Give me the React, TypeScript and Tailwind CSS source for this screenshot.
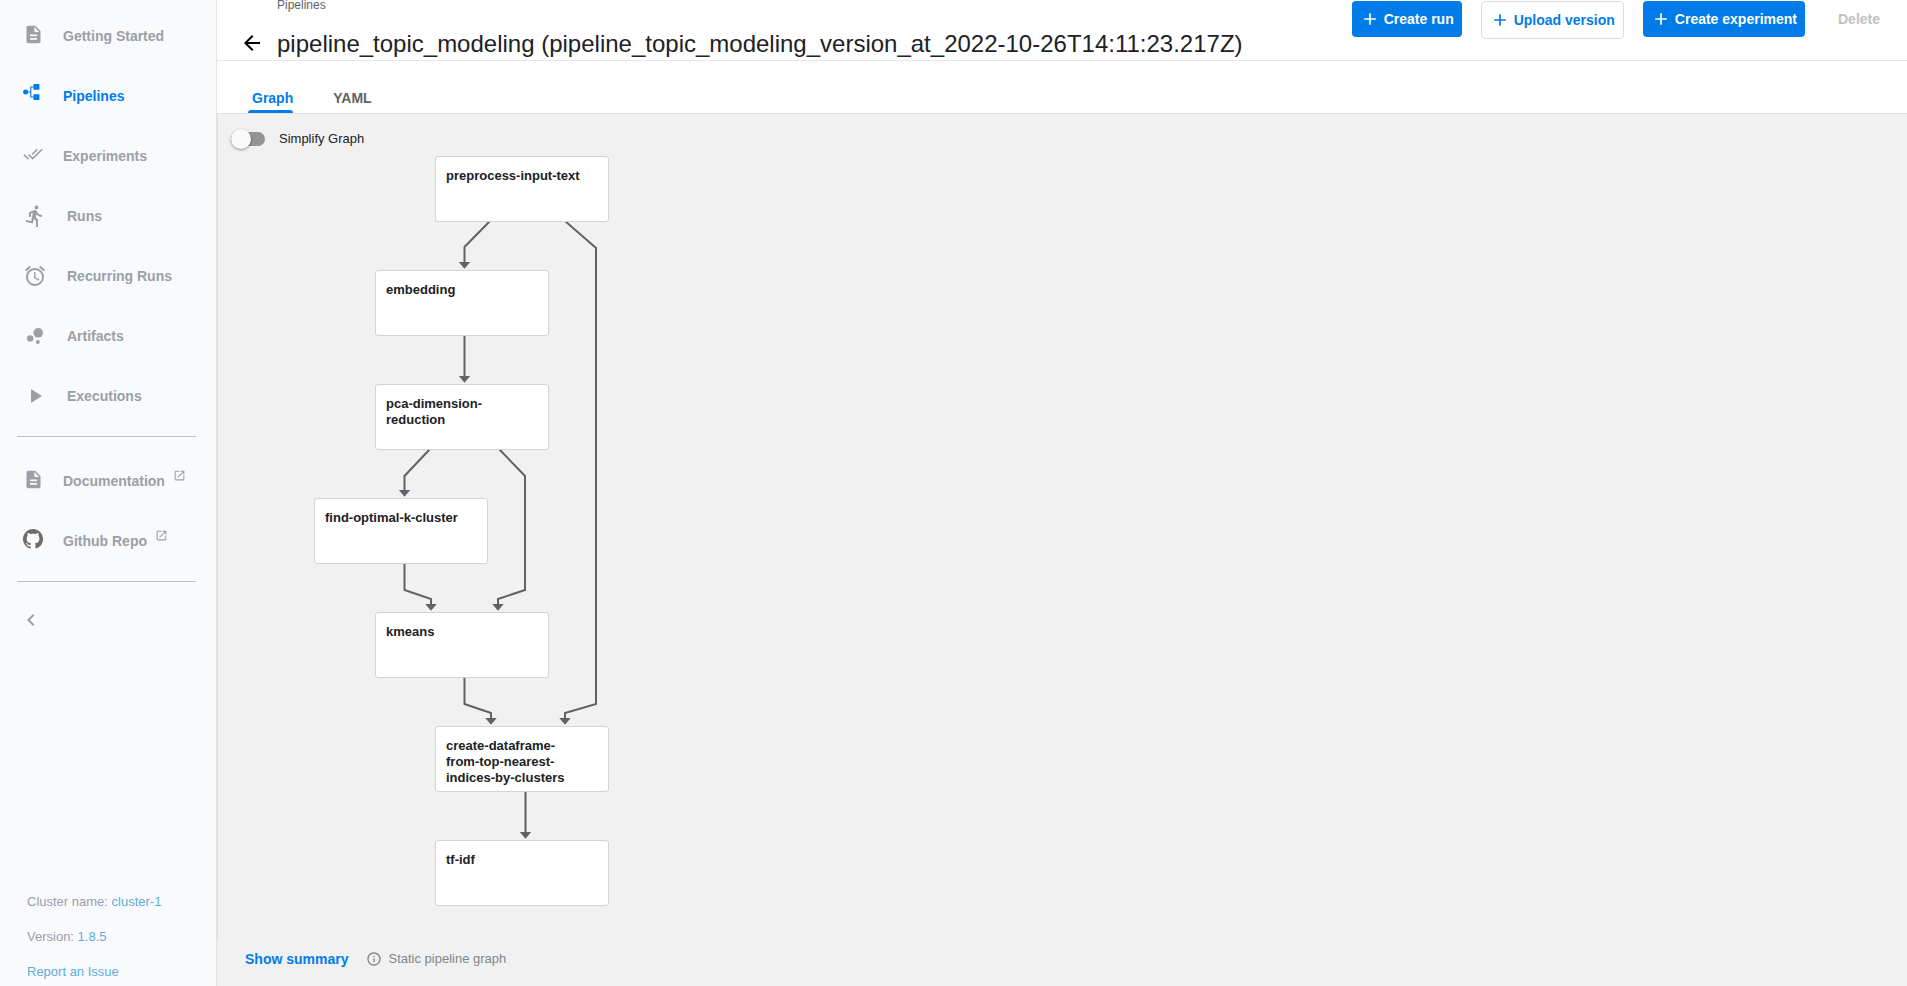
import { useState } from 'react';
import type { ReactNode } from 'react';
import {
  MdAccessAlarm,
  MdAdd,
  MdArrowBack,
  MdBubbleChart,
  MdChevronLeft,
  MdDescription,
  MdDirectionsRun,
  MdDoneAll,
  MdInfoOutline,
  MdOpenInNew,
  MdPlayArrow,
} from 'react-icons/md';

function PipelinesIcon() {
  return (
    <svg width="20" height="20" viewBox="0 0 20 20" fill="currentColor" aria-hidden="true">
      <circle cx="2.6" cy="8" r="2.5" />
      <path d="M10.5 3H7.8v10h2.7M2.4 8h5.4" fill="none" stroke="currentColor" strokeWidth="1.1" />
      <rect x="10.4" y="0" width="6" height="5.8" rx="0.4" />
      <rect x="10.4" y="10.2" width="6" height="5.8" rx="0.4" />
    </svg>
  );
}

function GithubIcon() {
  return (
    <svg width="20" height="20" viewBox="0 0 16 16" fill="#6e6e6e" aria-hidden="true">
      <path d="M8 0C3.58 0 0 3.58 0 8c0 3.54 2.29 6.53 5.47 7.59.4.07.55-.17.55-.38 0-.19-.01-.82-.01-1.49-2.01.37-2.53-.49-2.69-.94-.09-.23-.48-.94-.82-1.13-.28-.15-.68-.52-.01-.53.63-.01 1.08.58 1.23.82.72 1.21 1.87.87 2.33.66.07-.52.28-.87.51-1.07-1.78-.2-3.64-.89-3.64-3.95 0-.87.31-1.59.82-2.15-.08-.2-.36-1.02.08-2.12 0 0 .67-.21 2.2.82.64-.18 1.32-.27 2-.27s1.36.09 2 .27c1.53-1.04 2.2-.82 2.2-.82.44 1.1.16 1.92.08 2.12.51.56.82 1.27.82 2.15 0 3.07-1.87 3.75-3.65 3.95.29.25.54.73.54 1.48 0 1.07-.01 1.93-.01 2.2 0 .21.15.46.55.38A8.01 8.01 0 0 0 16 8c0-4.42-3.58-8-8-8z" />
    </svg>
  );
}

type NavItem = {
  label: string;
  icon: ReactNode;
  large?: boolean;
  active?: boolean;
  external?: boolean;
};

const mainNav: NavItem[] = [
  { label: 'Getting Started', icon: <MdDescription size={21} /> },
  { label: 'Pipelines', icon: <PipelinesIcon />, active: true },
  { label: 'Experiments', icon: <MdDoneAll size={20} /> },
  { label: 'Runs', icon: <MdDirectionsRun size={24} />, large: true },
  { label: 'Recurring Runs', icon: <MdAccessAlarm size={24} />, large: true },
  { label: 'Artifacts', icon: <MdBubbleChart size={24} />, large: true },
  { label: 'Executions', icon: <MdPlayArrow size={24} />, large: true },
];

const linkNav: NavItem[] = [
  { label: 'Documentation', icon: <MdDescription size={21} />, external: true },
  { label: 'Github Repo', icon: <GithubIcon />, external: true },
];

function NavLink({ item }: { item: NavItem }) {
  return (
    <a
      href="#"
      aria-current={item.active ? 'page' : undefined}
      className={`flex h-[60px] items-center gap-5 pl-[23px] text-sm font-bold whitespace-nowrap ${
        item.active ? 'text-[#007cee]' : 'text-[#9aa0a6]'
      }`}
    >
      <span
        className={
          item.large
            ? 'flex size-6 shrink-0 items-center justify-center'
            : 'mb-1 flex size-5 shrink-0 items-center justify-center'
        }
      >
        <span className="shrink-0">{item.icon}</span>
      </span>
      <span className="flex items-center gap-2">
        {item.label}
        {item.external && <MdOpenInNew size={13} className="mb-3" />}
      </span>
    </a>
  );
}

function Sidebar() {
  return (
    <aside className="flex w-[217px] shrink-0 flex-col border-r border-[#e4e7ea] bg-[#f9fafc] pt-[6px] pb-1">
      <nav>
        {mainNav.map((item) => (
          <NavLink key={item.label} item={item} />
        ))}
        <hr className="mt-[10px] mr-5 mb-[14px] ml-[17px] border-[#bdc1c6]" />
        {linkNav.map((item) => (
          <NavLink key={item.label} item={item} />
        ))}
        <hr className="mt-[10px] mr-5 ml-[17px] border-[#bdc1c6]" />
      </nav>
      <button type="button" aria-label="Collapse menu" className="mt-[26px] ml-[19px] self-start text-[#9aa0a6]">
        <MdChevronLeft size={24} />
      </button>
      <div className="mt-auto flex flex-col gap-[15px] pl-[27px] text-[13px] leading-5 text-[#9aa0a6]">
        <p>
          Cluster name: <a href="#" className="text-[#5facdc]">cluster-1</a>
        </p>
        <p>
          Version: <a href="#" className="text-[#5facdc]">1.8.5</a>
        </p>
        <a href="#" className="text-[#5facdc]">Report an Issue</a>
      </div>
    </aside>
  );
}

function PrimaryButton({ label }: { label: string }) {
  return (
    <button
      type="button"
      className="flex h-9 items-center gap-1 rounded-[4px] bg-[#007ce9] px-2 text-sm font-bold whitespace-nowrap text-white"
    >
      <MdAdd size={20} />
      {label}
    </button>
  );
}

function Header() {
  return (
    <header className="flex items-start justify-between border-b border-[#e6e7e8] bg-white pb-[2px]">
      <div className="pl-[23px]">
        <div className="pl-[37px] text-xs leading-[10px] text-[#5f6368]">Pipelines</div>
        <div className="mt-5 flex items-start gap-[13px]">
          <a href="#" aria-label="Back" className="pt-px text-black">
            <MdArrowBack size={24} />
          </a>
          <h1 className="text-2xl leading-7 whitespace-nowrap text-[#202124]">
            pipeline_topic_modeling (pipeline_topic_modeling_version_at_2022-10-26T14:11:23.217Z)
          </h1>
        </div>
      </div>
      <div className="flex items-start gap-[19px] pt-px pr-[13px]">
        <PrimaryButton label="Create run" />
        <button
          type="button"
          className="flex h-[38px] items-center gap-1 rounded-[4px] border border-[#dadce0] bg-white px-2 text-sm font-bold whitespace-nowrap text-[#007ce9]"
        >
          <MdAdd size={20} />
          Upload version
        </button>
        <PrimaryButton label="Create experiment" />
        <button type="button" disabled className="h-9 w-[70px] text-sm font-bold text-[#c2c2c2]">
          Delete
        </button>
      </div>
    </header>
  );
}

function Tabs() {
  return (
    <div role="tablist" className="flex h-[53px] items-end gap-9 border-b border-[#e0e2e4] bg-white pl-[31px] text-sm font-bold">
      <button type="button" role="tab" aria-selected="true" className="flex flex-col text-[#007cee]">
        <span className="pl-1 leading-6">Graph</span>
        <span className="h-[3px] w-full rounded-t-[3px] bg-[#007cee]" />
      </button>
      <button type="button" role="tab" aria-selected="false" className="pb-[3px] pl-1 leading-6 text-[#5f6368]">
        YAML
      </button>
    </div>
  );
}

const nodes = [
  { label: 'preprocess-input-text', x: 217, y: 7 },
  { label: 'embedding', x: 157, y: 121 },
  { label: 'pca-dimension-reduction', x: 157, y: 235 },
  { label: 'find-optimal-k-cluster', x: 96, y: 349 },
  { label: 'kmeans', x: 157, y: 463 },
  { label: 'create-dataframe-from-top-nearest-indices-by-clusters', x: 217, y: 577 },
  { label: 'tf-idf', x: 217, y: 691 },
];

const edges = [
  '272,72 246.5,98 246.5,114',
  '347,72 378,99 378,555 347,564 347,570',
  '246.5,187 246.5,228',
  '212,300 186.5,327 186.5,342',
  '281,300 307,327 307,441 280,450 280,456',
  '186.5,415 186.5,441 213,450 213,456',
  '246.5,529 246.5,555 273,564 273,570',
  '307.5,643 307.5,684',
];

function Graph() {
  return (
    <div className="relative min-h-[790px]">
      <svg className="absolute top-0 left-0" width="420" height="770" fill="none" stroke="#5f6368" strokeWidth="2" aria-hidden="true">
        <defs>
          <marker id="arrow" markerUnits="userSpaceOnUse" markerWidth="12" markerHeight="7" refX="6" refY="1" overflow="visible">
            <path d="M0.3 0h11.4L6 6.7z" fill="#5f6368" stroke="none" />
          </marker>
        </defs>
        {edges.map((points) => (
          <polyline key={points} points={points} markerEnd="url(#arrow)" />
        ))}
      </svg>
      {nodes.map((node) => (
        <button
          key={node.label}
          type="button"
          className="absolute flex h-[66px] w-[174px] items-start rounded-[3px] border border-[#d2d4d6] bg-white px-[10px] pt-[11px] text-left text-[13px] leading-4 font-bold text-[#202124]"
          style={{ left: node.x, top: node.y }}
        >
          <span className="w-[137px]">{node.label}</span>
        </button>
      ))}
    </div>
  );
}

function SimplifySwitch() {
  const [on, setOn] = useState(false);
  return (
    <label className="flex h-[35px] items-center gap-[14px] pt-[14px] pl-[13px] text-[13px] leading-5 text-[#202124]">
      <span className="relative flex h-5 w-[34px] items-center">
        <input type="checkbox" className="peer sr-only" checked={on} onChange={() => setOn(!on)} />
        <span className="h-[14px] w-full rounded-full bg-[#949494] peer-checked:bg-[#7fbdf4]" />
        <span className="absolute top-0 left-0 size-5 rounded-full bg-[#fafafa] shadow-[0_1px_3px_rgba(0,0,0,0.4)] peer-checked:left-[14px] peer-checked:bg-[#007cee]" />
      </span>
      Simplify Graph
    </label>
  );
}

export default function App() {
  return (
    <div className="flex min-h-screen bg-white font-['Liberation_Sans',Arial,sans-serif]">
      <Sidebar />
      <main className="flex min-w-0 flex-1 flex-col bg-[#f1f1f1]">
        <Header />
        <Tabs />
        <section className="flex-1 border-l border-[#dadce0]">
          <SimplifySwitch />
          <Graph />
        </section>
        <footer className="flex h-[45px] items-center gap-[18px] pb-[9px] pl-7">
          <button type="button" className="text-sm font-bold text-[#007cee]">
            Show summary
          </button>
          <span className="flex items-center gap-[6px] text-[13px] text-[#80868b]">
            <MdInfoOutline size={16} />
            Static pipeline graph
          </span>
        </footer>
      </main>
    </div>
  );
}
